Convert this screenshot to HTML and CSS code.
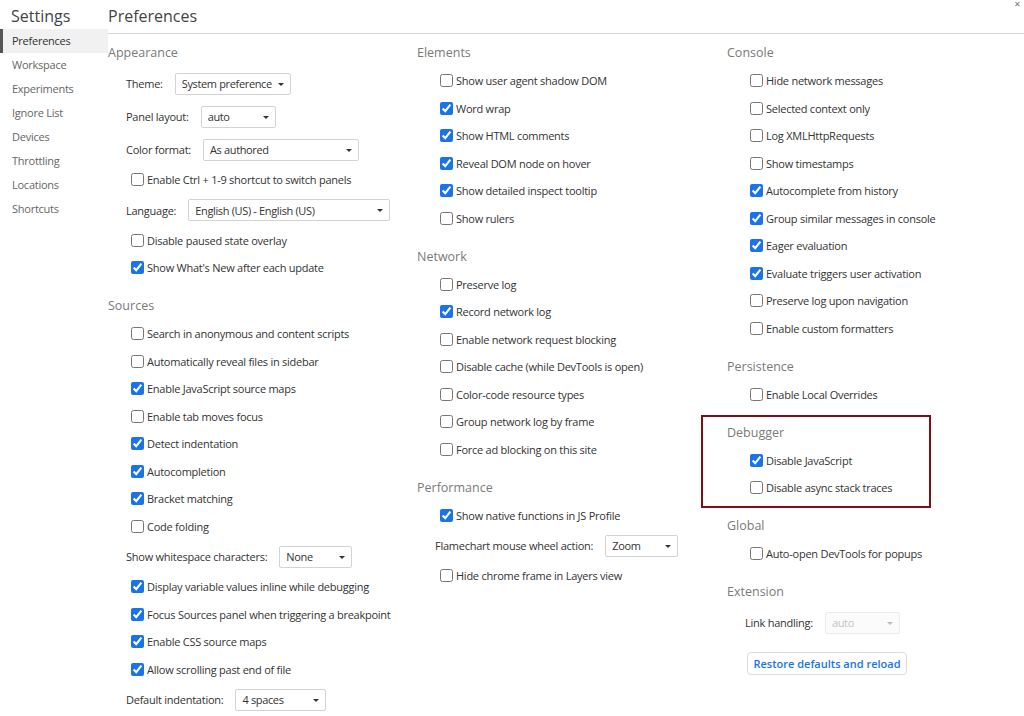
FILE: index.html
```html
<!DOCTYPE html>
<html lang="en">

<head>
    <meta charset="UTF-8">
    <meta name="viewport" content="width=device-width, initial-scale=1.0">
    <title>Settings - Preferences</title>
    <link rel="stylesheet" href="styles.css">
</head>

<body>
    <div class="app">
        <nav class="sidebar">
            <div class="sidebar-title">Settings</div>
            <ul class="tabs">
                <li class="tab active">Preferences</li>
                <li class="tab">Workspace</li>
                <li class="tab">Experiments</li>
                <li class="tab">Ignore List</li>
                <li class="tab">Devices</li>
                <li class="tab">Throttling</li>
                <li class="tab">Locations</li>
                <li class="tab">Shortcuts</li>
            </ul>
        </nav>

        <main class="content">
            <header class="content-header">
                <h1>Preferences</h1>
                <span class="close">&#x2715;</span>
            </header>

            <div class="columns">
                <!-- column 1 -->
                <div class="column">
                    <section class="section">
                        <div class="section-title">Appearance</div>
                        <div class="row select-row">
                            <span>Theme:</span>
                            <span class="select w-theme"><select><option>System preference</option></select></span>
                        </div>
                        <div class="row select-row">
                            <span>Panel layout:</span>
                            <span class="select w-panel"><select><option>auto</option></select></span>
                        </div>
                        <div class="row select-row">
                            <span>Color format:</span>
                            <span class="select w-color"><select><option>As authored</option></select></span>
                        </div>
                        <label class="row"><input type="checkbox">Enable Ctrl + 1-9 shortcut to switch panels</label>
                        <div class="row select-row">
                            <span>Language:</span>
                            <span class="select w-language"><select><option>English (US) - English (US)</option></select></span>
                        </div>
                        <label class="row"><input type="checkbox">Disable paused state overlay</label>
                        <label class="row"><input type="checkbox" checked>Show What's New after each update</label>
                    </section>

                    <section class="section">
                        <div class="section-title">Sources</div>
                        <label class="row"><input type="checkbox">Search in anonymous and content scripts</label>
                        <label class="row"><input type="checkbox">Automatically reveal files in sidebar</label>
                        <label class="row"><input type="checkbox" checked>Enable JavaScript source maps</label>
                        <label class="row"><input type="checkbox">Enable tab moves focus</label>
                        <label class="row"><input type="checkbox" checked>Detect indentation</label>
                        <label class="row"><input type="checkbox" checked>Autocompletion</label>
                        <label class="row"><input type="checkbox" checked>Bracket matching</label>
                        <label class="row"><input type="checkbox">Code folding</label>
                        <div class="row select-row">
                            <span>Show whitespace characters:</span>
                            <span class="select w-whitespace"><select><option>None</option></select></span>
                        </div>
                        <label class="row"><input type="checkbox" checked>Display variable values inline while debugging</label>
                        <label class="row"><input type="checkbox" checked>Focus Sources panel when triggering a breakpoint</label>
                        <label class="row"><input type="checkbox" checked>Enable CSS source maps</label>
                        <label class="row"><input type="checkbox" checked>Allow scrolling past end of file</label>
                        <div class="row select-row">
                            <span>Default indentation:</span>
                            <span class="select w-indent"><select><option>4 spaces</option></select></span>
                        </div>
                    </section>
                </div>

                <!-- column 2 -->
                <div class="column">
                    <section class="section">
                        <div class="section-title">Elements</div>
                        <label class="row"><input type="checkbox">Show user agent shadow DOM</label>
                        <label class="row"><input type="checkbox" checked>Word wrap</label>
                        <label class="row"><input type="checkbox" checked>Show HTML comments</label>
                        <label class="row"><input type="checkbox" checked>Reveal DOM node on hover</label>
                        <label class="row"><input type="checkbox" checked>Show detailed inspect tooltip</label>
                        <label class="row"><input type="checkbox">Show rulers</label>
                    </section>

                    <section class="section">
                        <div class="section-title">Network</div>
                        <label class="row"><input type="checkbox">Preserve log</label>
                        <label class="row"><input type="checkbox" checked>Record network log</label>
                        <label class="row"><input type="checkbox">Enable network request blocking</label>
                        <label class="row"><input type="checkbox">Disable cache (while DevTools is open)</label>
                        <label class="row"><input type="checkbox">Color-code resource types</label>
                        <label class="row"><input type="checkbox">Group network log by frame</label>
                        <label class="row"><input type="checkbox">Force ad blocking on this site</label>
                    </section>

                    <section class="section">
                        <div class="section-title">Performance</div>
                        <label class="row"><input type="checkbox" checked>Show native functions in JS Profile</label>
                        <div class="row select-row">
                            <span>Flamechart mouse wheel action:</span>
                            <span class="select w-flame"><select><option>Zoom</option></select></span>
                        </div>
                        <label class="row"><input type="checkbox">Hide chrome frame in Layers view</label>
                    </section>
                </div>

                <!-- column 3 -->
                <div class="column">
                    <section class="section">
                        <div class="section-title">Console</div>
                        <label class="row"><input type="checkbox">Hide network messages</label>
                        <label class="row"><input type="checkbox">Selected context only</label>
                        <label class="row"><input type="checkbox">Log XMLHttpRequests</label>
                        <label class="row"><input type="checkbox">Show timestamps</label>
                        <label class="row"><input type="checkbox" checked>Autocomplete from history</label>
                        <label class="row"><input type="checkbox" checked>Group similar messages in console</label>
                        <label class="row"><input type="checkbox" checked>Eager evaluation</label>
                        <label class="row"><input type="checkbox" checked>Evaluate triggers user activation</label>
                        <label class="row"><input type="checkbox">Preserve log upon navigation</label>
                        <label class="row"><input type="checkbox">Enable custom formatters</label>
                    </section>

                    <section class="section">
                        <div class="section-title">Persistence</div>
                        <label class="row"><input type="checkbox">Enable Local Overrides</label>
                    </section>

                    <section class="section highlighted">
                        <div class="section-title">Debugger</div>
                        <label class="row"><input type="checkbox" checked>Disable JavaScript</label>
                        <label class="row"><input type="checkbox">Disable async stack traces</label>
                    </section>

                    <section class="section">
                        <div class="section-title">Global</div>
                        <label class="row"><input type="checkbox">Auto-open DevTools for popups</label>
                    </section>

                    <section class="section">
                        <div class="section-title">Extension</div>
                        <div class="row select-row">
                            <span>Link handling:</span>
                            <span class="select w-link disabled"><select disabled><option>auto</option></select></span>
                        </div>
                        <button class="restore-button">Restore defaults and reload</button>
                    </section>
                </div>
            </div>
        </main>
    </div>
</body>

</html>
```

FILE: styles.css
```css
body {
    margin: 0;
    font-family: "Open Sans", "Noto Sans", sans-serif;
    font-size: 11px;
    letter-spacing: -0.25px;
    color: #333;
    background-color: #fff;
    overflow: hidden;
}

.app {
    display: flex;
    height: 716px;
}

/* sidebar */

.sidebar {
    width: 108px;
    flex-shrink: 0;
}

.sidebar-title {
    font-size: 16px;
    letter-spacing: 0;
    line-height: 22px;
    padding: 5px 0 0 11px;
    margin-bottom: 2px;
    color: #444;
}

.tabs {
    list-style: none;
    margin: 0;
    padding: 0;
}

.tab {
    height: 24px;
    line-height: 24px;
    padding-left: 12px;
    color: #666;
}

.tab.active {
    background-color: #f1f1f1;
    color: #333;
    box-shadow: inset 3px 0 #555;
}

/* main panel */

.content {
    flex: 1;
    min-width: 0;
}

.content-header {
    height: 33px;
    border-bottom: 1px solid #d6d6d6;
    display: flex;
    align-items: flex-start;
}

.content-header h1 {
    margin: 0;
    padding-top: 5px;
    font-size: 16px;
    font-weight: normal;
    letter-spacing: 0;
    line-height: 22px;
    color: #444;
}

.close {
    margin-left: auto;
    margin-right: 3px;
    font-size: 8px;
    line-height: 8px;
    color: #777;
}

.columns {
    display: grid;
    grid-template-columns: 309px 310px 310px;
    padding-top: 8px;
}

.section {
    position: relative;
    margin-bottom: 13.5px;
}

.section-title {
    font-size: 12.5px;
    letter-spacing: 0;
    line-height: 22px;
    color: #7a7a7a;
    margin-bottom: 3px;
}

.row {
    display: flex;
    align-items: center;
    height: 27.5px;
    padding-left: 19px;
    white-space: nowrap;
}

.row.select-row {
    height: 33px;
    padding-left: 18px;
}

.row input[type="checkbox"] {
    width: 13px;
    height: 13px;
    margin: 0 3px 0 4px;
    accent-color: #1a73e8;
}

/* selects */

.select {
    position: relative;
    display: inline-block;
    margin-left: 12px;
}

.select select {
    appearance: none;
    width: 100%;
    height: 22px;
    padding: 0 12px 0 6px;
    border: 1px solid #d3d3d3;
    border-radius: 2px;
    background-color: #fff;
    font: inherit;
    letter-spacing: -0.35px;
    color: #333;
}

.select::after {
    content: "";
    position: absolute;
    right: 7px;
    top: 10px;
    border-left: 3px solid transparent;
    border-right: 3px solid transparent;
    border-top: 3px solid #333;
    pointer-events: none;
}

.select.disabled select {
    background-color: #fafafa;
    border-color: #e3e3e3;
    color: #aaa;
}

.select.disabled::after {
    border-top-color: #bbb;
}

.w-theme { width: 116px; }
.w-panel { width: 75px; }
.w-color { width: 156px; }
.w-language { width: 202px; }
.w-whitespace { width: 73px; }
.w-indent { width: 91px; }
.w-flame { width: 73px; }
.w-link { width: 75px; }

.restore-button {
    display: block;
    margin: 13px 0 0 20px;
    width: 160px;
    height: 23px;
    padding: 0;
    border: 1px solid #dadce0;
    border-radius: 4px;
    background-color: #fff;
    color: #1a73e8;
    font: inherit;
    font-weight: 600;
    white-space: nowrap;
}

/* annotation frame round the Debugger section */
.section.highlighted::after {
    content: "";
    position: absolute;
    left: -26px;
    top: -6.5px;
    width: 226px;
    height: 89px;
    border: 2px solid #7b1113;
}
```
